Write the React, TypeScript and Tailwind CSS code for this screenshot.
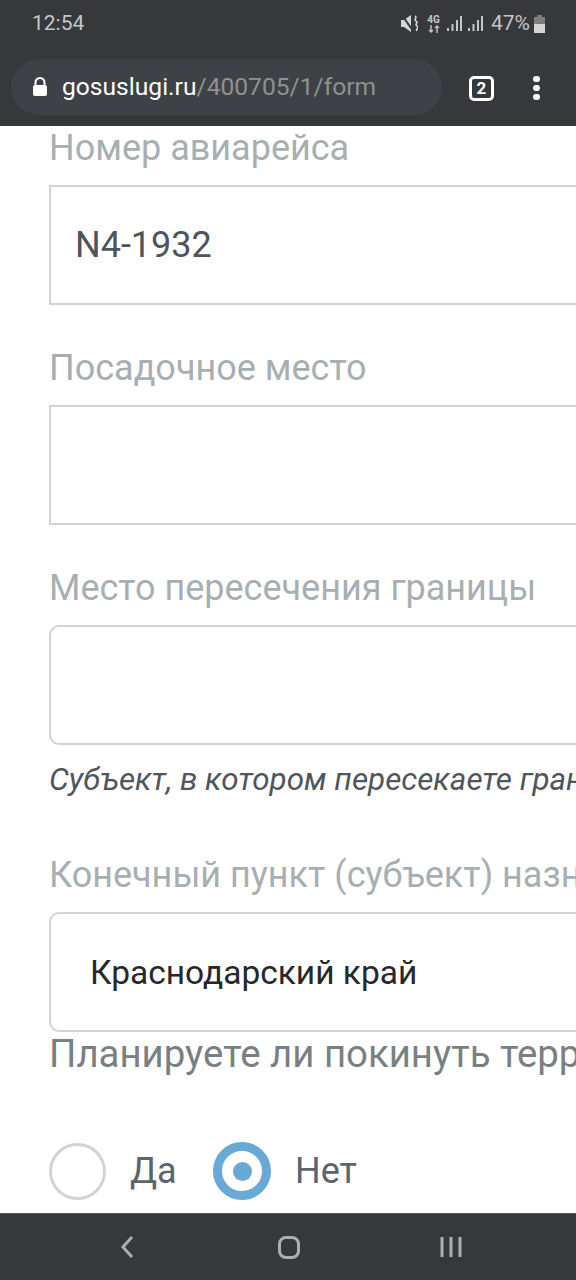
import { ReactNode } from 'react'

const labelClass = 'h-10 text-[36px] leading-10 text-[#a7afb3] whitespace-nowrap'
const boxClass = 'w-[640px] h-[120px] border-2 border-[#d2d4d4] bg-white flex items-center shrink-0'

function StatusBar() {
  return (
    <div className="h-[59px] pl-8 pr-[31px] flex items-start justify-between text-[#c4c6c7]">
      <span className="mt-[10px] text-[21px] leading-[27px]">12:54</span>
      <div className="mt-[10px] h-[27px] flex items-center">
        <svg width="17" height="17" viewBox="0 0 17 17" className="mr-[9px]">
          <path d="M0 5h3l7-5v17l-7-5H0z" fill="#d4d5d6" />
          <path d="M1 0l11 16" stroke="#36383c" strokeWidth="2" />
          <path d="M14 1c3 2-2 3 1 5s-2 3 1 5-2 3 0 5" stroke="#d4d5d6" strokeWidth="1.6" fill="none" />
        </svg>
        <div className="flex flex-col items-center w-[13px] mr-[7px]">
          <span className="text-[10px] leading-[10px] font-bold">4G</span>
          <svg width="12" height="8" viewBox="0 0 12 8">
            <path d="M3 0v7M1 5l2 2 2-2M9 8V1M7 3l2-2 2 2" stroke="#c4c6c7" strokeWidth="1.4" fill="none" />
          </svg>
        </div>
        <Signal />
        <Signal />
        <span className="text-[21px] leading-[27px] ml-[2px]">47%</span>
        <svg width="11" height="18" viewBox="0 0 11 18" className="ml-[4px]">
          <path d="M3 0h5v2h3v7H0V2h3z" fill="#7c7e80" />
          <rect y="9" width="11" height="9" fill="#d4d5d6" />
        </svg>
      </div>
    </div>
  )
}

function Signal() {
  return (
    <svg width="15" height="16" viewBox="0 0 15 16" className="mr-[6px]">
      <rect x="0" y="12" width="2" height="3" fill="#c4c6c7" />
      <rect x="4.5" y="8" width="2" height="7" fill="#c4c6c7" />
      <rect x="9" y="4" width="2" height="11" fill="#c4c6c7" />
      <rect x="13" y="0" width="2" height="15" fill="#c4c6c7" />
    </svg>
  )
}

function UrlBar() {
  return (
    <div className="h-[67px] pl-[11px] flex items-start">
      <div className="w-[431px] h-14 rounded-[28px] bg-[#3e4145] flex items-center pl-[21px] text-[24.6px]">
        <svg width="16" height="20" viewBox="0 0 16 20" className="mr-[14px]">
          <path d="M3.5 8V5.5a4.5 4.5 0 0 1 9 0V8" stroke="#fff" strokeWidth="2" fill="none" />
          <rect x="1" y="8" width="14" height="11" rx="2" fill="#fff" />
        </svg>
        <span className="text-white">gosuslugi.ru</span>
        <span className="text-[#8f9193]">/400705/1/form</span>
      </div>
      <div className="ml-[27px] mt-[17px] w-[25px] h-[25px] rounded-[5px] border-[3px] border-white flex items-center justify-center text-white text-[17px] font-bold leading-none">
        2
      </div>
      <div className="ml-[39px] mt-[17px] flex flex-col gap-[3px]">
        <span className="w-[7px] h-[6px] rounded-full bg-white" />
        <span className="w-[7px] h-[6px] rounded-full bg-white" />
        <span className="w-[7px] h-[6px] rounded-full bg-white" />
      </div>
    </div>
  )
}

function Field({ label, rounded, children }: { label: string; rounded?: boolean; children?: ReactNode }) {
  return (
    <div className="flex flex-col gap-[17px]">
      <div className={labelClass}>{label}</div>
      <div className={boxClass + (rounded ? ' rounded-[10px]' : '')}>{children}</div>
    </div>
  )
}

export default function App() {
  return (
    <div className="w-[576px] h-[1280px] flex flex-col overflow-hidden bg-white font-['Roboto',sans-serif]">
      <header className="h-[126px] shrink-0 bg-[#36383c]">
        <StatusBar />
        <UrlBar />
      </header>

      <main className="flex-1 min-h-0 overflow-hidden pl-[49px] flex flex-col">
        <div className="flex flex-col gap-[43px] mt-[2px]">
          <Field label="Номер авиарейса">
            <span className="pl-[24px] text-[36px] text-[#4c555c]">N4-1932</span>
          </Field>
          <Field label="Посадочное место" />
          <Field label="Место пересечения границы" rounded />
        </div>
        <p className="mt-[19px] h-8 text-[31.4px] leading-8 italic text-[#50565b] whitespace-nowrap">
          Субъект, в котором пересекаете границу
        </p>
        <div className="mt-[59px]">
          <Field label="Конечный пункт (субъект) назначения" rounded>
            <span className="pl-[39px] pt-[3px] text-[33.5px] text-[#26282a]">Краснодарский край</span>
          </Field>
        </div>
        <div className="mt-[2px] h-10 text-[38.4px] leading-10 text-[#7a7f82] whitespace-nowrap">
          Планируете ли покинуть территорию
        </div>
        <div className="mt-[68px] flex items-center h-[58px] text-[36px] text-[#5b656c]">
          <span className="w-[57px] h-[57px] rounded-full border-[3px] border-[#d2d4d4] shrink-0" />
          <span className="ml-[24px] w-[58px]">Да</span>
          <span className="ml-[25px] w-[58px] h-[58px] rounded-full border-[9px] border-[#68a9d6] flex items-center justify-center shrink-0">
            <span className="w-[19px] h-[19px] rounded-full bg-[#68a9d6]" />
          </span>
          <span className="ml-[24px]">Нет</span>
        </div>
      </main>

      <footer className="h-[67px] shrink-0 bg-[#36383c] border-t border-[#55575a] flex items-center justify-between pl-[120px] pr-[114px]">
        <svg width="14" height="24" viewBox="0 0 14 24">
          <path d="M12 2L3 12l9 10" stroke="#adaeb0" strokeWidth="3" fill="none" />
        </svg>
        <span className="ml-[4px] w-[22px] h-[23px] rounded-[8px] border-[3px] border-[#adaeb0]" />
        <svg width="22" height="22" viewBox="0 0 22 22">
          <path d="M2 1v20M11 1v20M20 1v20" stroke="#adaeb0" strokeWidth="3" fill="none" />
        </svg>
      </footer>
    </div>
  )
}
